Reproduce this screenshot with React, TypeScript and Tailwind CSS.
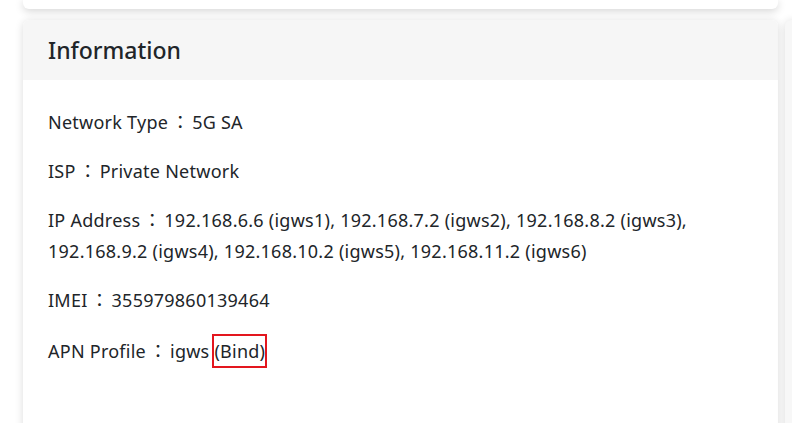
const rows: { label: string; value: React.ReactNode }[] = [
  { label: "Network Type", value: "5G SA" },
  { label: "ISP", value: "Private Network" },
  {
    label: "IP Address",
    value:
      "192.168.6.6 (igws1), 192.168.7.2 (igws2), 192.168.8.2 (igws3), 192.168.9.2 (igws4), 192.168.10.2 (igws5), 192.168.11.2 (igws6)",
  },
  { label: "IMEI", value: "355979860139464" },
  {
    label: "APN Profile",
    value: (
      <>
        igws{" "}
        <span className="inline-block border-2 border-[#e3161e] leading-[30px] -ml-[2px]">(Bind)</span>
      </>
    ),
  },
];

export default function App() {
  return (
    <div
      className="h-[423px] w-[792px] overflow-hidden bg-white text-[#212529]"
      style={{ fontFamily: '"Noto Sans", "Noto Sans CJK TC", sans-serif' }}
    >
      <div className="flex gap-[7px] pl-[23px]">
        <div className="w-[755px] shrink-0">
          {/* bottom edge of the card above */}
          <div className="h-[9px] rounded-b-md bg-white shadow-[0_2px_9px_rgba(0,0,0,0.18)]" />

          <section className="mt-[11px] h-[500px] rounded-md bg-white shadow-[0_1px_8px_rgba(0,0,0,0.14)]">
            <header className="flex h-[60px] items-center rounded-t-md bg-[#f6f6f6] px-[25px]">
              <h2 className="text-[23px] font-medium">Information</h2>
            </header>
            <div className="px-[25px] pt-[27px] text-[18px] leading-[31px] tracking-[0.25px]">
              {rows.map((r) => (
                <p key={r.label} className="mb-[18px]">
                  {r.label}
                  <span className="mx-[3px] tracking-normal">：</span>
                  {r.value}
                </p>
              ))}
            </div>
          </section>
        </div>

        <div className="mt-[20px] h-[500px] w-[40px] shrink-0 rounded-md bg-[#f7f7f7] shadow-[0_1px_8px_rgba(0,0,0,0.14)]" />
      </div>
    </div>
  );
}
